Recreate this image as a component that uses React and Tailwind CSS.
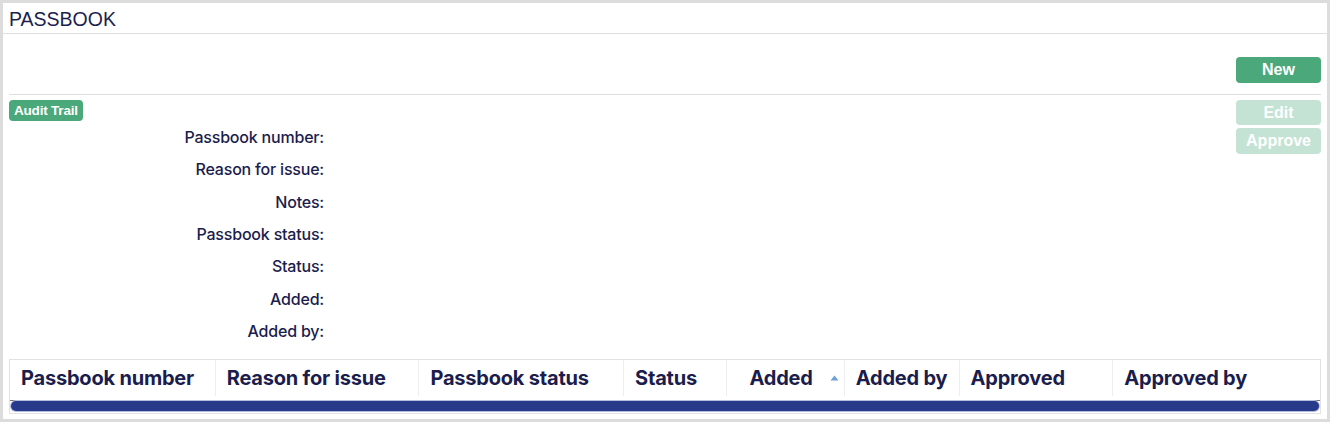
import React from 'react';

const labels = ['Passbook number:', 'Reason for issue:', 'Notes:', 'Passbook status:', 'Status:', 'Added:', 'Added by:'];

const columns = [
  { name: 'Passbook number', w: 'w-[205px]' },
  { name: 'Reason for issue', w: 'w-[204px]' },
  { name: 'Passbook status', w: 'w-[205px]' },
  { name: 'Status', w: 'w-[103px]' },
  { name: 'Added', w: 'w-[118px]', sort: true },
  { name: 'Added by', w: 'w-[115px]' },
  { name: 'Approved', w: 'w-[154px]' },
  { name: 'Approved by', w: 'w-[208px]' },
];

function App() {
  return (
    <div className="w-[1330px] h-[422px] border-[3px] border-[#dcdcdc] bg-white text-[#1b1d4d] font-['Inter',sans-serif] overflow-hidden">
      {/* title */}
      <div className="h-[31px] border-b border-[#dedede] px-[6px] pt-[5px]">
        <h1 className="font-['Liberation_Sans',Arial,sans-serif] text-[19.5px] leading-[22px] text-[#1c1f50]">PASSBOOK</h1>
      </div>

      <div className="px-[6px]">
        {/* toolbar */}
        <div className="flex justify-end pt-[23px] pb-[11px] border-b border-[#dedede]">
          <button className="w-[85px] h-[26px] rounded-[4px] bg-[#4aa87a] text-white font-bold text-[16px] font-['Liberation_Sans',Arial,sans-serif]">New</button>
        </div>

        {/* details */}
        <div className="flex justify-between pt-[5px]">
          <div>
            <div className="flex">
              <span className="h-[21px] px-[5px] rounded-[4px] bg-[#4aa87a] text-white font-bold text-[13.5px] leading-[21px] tracking-[-0.2px] font-['Liberation_Sans',Arial,sans-serif]">Audit Trail</span>
            </div>
            <div className="w-[315px] text-right">
              {labels.map((l) => (
                <div key={l} className="h-[32.33px] leading-[32.33px] text-[16px] font-medium tracking-[-0.2px]">{l}</div>
              ))}
            </div>
          </div>
          <div className="flex flex-col gap-[3px]">
            <button className="w-[85px] h-[25px] rounded-[4px] bg-[#c4e3d4] text-white font-bold text-[16px] font-['Liberation_Sans',Arial,sans-serif]">Edit</button>
            <button className="w-[85px] h-[26px] rounded-[4px] bg-[#c4e3d4] text-white font-bold text-[16px] font-['Liberation_Sans',Arial,sans-serif]">Approve</button>
          </div>
        </div>

        {/* table */}
        <div className="mt-[12px] border border-[#e2e2e2]">
          <div className="flex h-[40px]">
            {columns.map((c, i) => (
              <div
                key={c.name}
                className={`${c.w} h-[36px] flex items-center text-[20px] font-bold tracking-[-0.2px] ${i > 0 ? 'border-l border-[#eeeeee]' : ''} ${c.sort ? 'justify-end pr-[5px]' : 'pl-[11px]'}`}
              >
                {c.name}
                {c.sort && (
                  <svg className="ml-[17px]" width="9" height="6" viewBox="0 0 9 6">
                    <path d="M4.5 0.5 L8.5 5.5 L0.5 5.5 Z" fill="#6f9fd8" />
                  </svg>
                )}
              </div>
            ))}
          </div>
          <div className="border-t border-[#777777] pb-[2px]">
            <div className="mx-[1px] h-[10px] rounded-full bg-[#283b8a] ring-1 ring-[#b7bde0]" />
          </div>
        </div>
      </div>
    </div>
  );
}

export default App;
